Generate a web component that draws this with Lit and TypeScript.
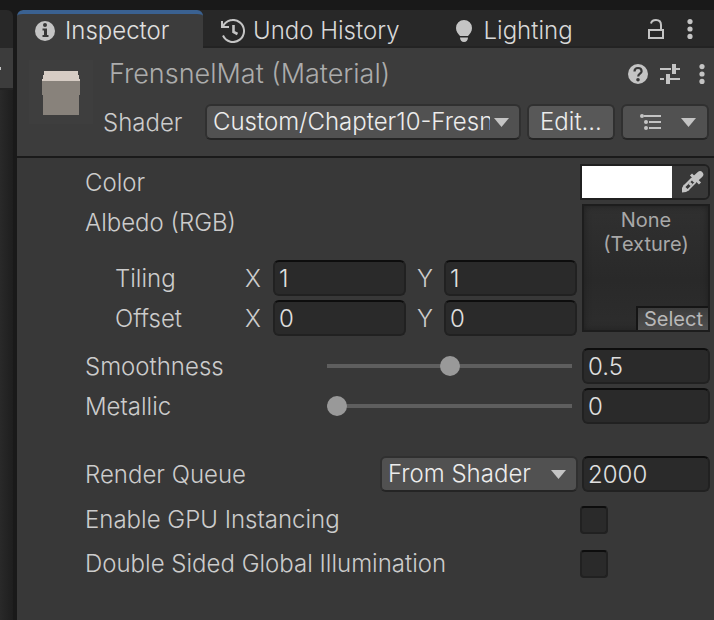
import { LitElement, html, css } from "lit";
import { customElement, state } from "lit/decorators.js";

const icons = {
  info: html`<svg width="20" height="20" viewBox="0 0 20 20" aria-hidden="true">
    <circle cx="10" cy="10" r="10" fill="#c4c4c4" />
    <circle cx="10" cy="4" r="2" fill="#383838" />
    <path d="M7.500 7.500h4.500v6.500h1.500v2H7.500v-2H9V9.500H7.500z" fill="#383838" />
  </svg>`,
  history: html`<svg width="24" height="24" viewBox="0 0 24 24" fill="none" stroke="#c4c4c4" stroke-width="2" aria-hidden="true">
    <path d="M1 2v6h7" />
    <path d="M2 7.500A11 11 0 1 1 2 16.500" />
    <path d="M12.500 6v7l4 2" stroke-width="2.600" />
  </svg>`,
  bulb: html`<svg width="16" height="22" viewBox="0 0 16 22" fill="#c4c4c4" aria-hidden="true">
    <path d="M8 0a8 8 0 0 1 8 8c0 3.500-2 5.500-4 8H4C2 13.500 0 11.500 0 8a8 8 0 0 1 8-8z" />
    <path d="M4 17.500h8c0 2.500-1.500 4.500-4 4.500s-4-2-4-4.500z" />
  </svg>`,
  lock: html`<svg width="16" height="20" viewBox="0 0 16 20" fill="none" stroke="#c4c4c4" stroke-width="2" aria-hidden="true">
    <rect x="1" y="11" width="14" height="8" />
    <path d="M3 4.500C3.500 2 5.500 1 8 1c3.500 0 5 2 5 5v5" />
  </svg>`,
  kebab: html`<svg width="6" height="20" viewBox="0 0 6 20" fill="#c4c4c4" aria-hidden="true">
    <circle cx="3" cy="2.600" r="2.600" /><circle cx="3" cy="10" r="2.600" /><circle cx="3" cy="17.400" r="2.600" />
  </svg>`,
  help: html`<svg width="20" height="20" viewBox="0 0 20 20" aria-hidden="true">
    <circle cx="10" cy="10" r="10" fill="#c4c4c4" />
    <path d="M6.500 7.500C6.500 5.200 8 4 10 4s3.600 1.200 3.600 3.200c0 2.500-3.400 2.600-3.400 5.300" fill="none" stroke="#383838" stroke-width="2.200" />
    <circle cx="10" cy="15.800" r="1.800" fill="#383838" />
  </svg>`,
  preset: html`<svg width="20" height="20" viewBox="0 0 20 20" aria-hidden="true">
    <path d="M0 5h11M16 5h4M0 15h4M9 15h11" stroke="#c4c4c4" stroke-width="2" />
    <path d="M14 0v10M8 10v10" stroke="#c4c4c4" stroke-width="4" />
  </svg>`,
  list: html`<svg width="22" height="16" viewBox="0 0 22 16" aria-hidden="true">
    <path d="M4 2h17M9 8h12M9 14h12" stroke="#c4c4c4" stroke-width="2" />
    <g fill="#c4c4c4"><circle cx="2" cy="2" r="2" /><circle cx="6" cy="8" r="2" /><circle cx="6" cy="14" r="2" /></g>
  </svg>`,
  arrow: html`<svg class="arrow" width="15" height="9" viewBox="0 0 15 9" fill="#c4c4c4" aria-hidden="true">
    <path d="M0 0h15L7.500 9z" />
  </svg>`,
  dropper: html`<svg width="22" height="22" viewBox="0 0 22 22" fill="none" stroke="#c4c4c4" aria-hidden="true">
    <path d="M12 9L4 17" stroke-width="7" />
    <path d="M0 21.500V17l2-3.500L7.500 19 4 21z" fill="#c4c4c4" stroke="none" />
    <path d="M12 9.500L4.500 17" stroke="#383838" stroke-width="3" />
    <path d="M9.500 12L7.500 14" stroke-width="3" />
    <path d="M9 3.500L18 12.500" stroke-width="3" />
    <path d="M13 8L18 3.500" stroke-width="6.500" stroke-linecap="round" />
  </svg>`,
  cube: html`<svg width="64" height="64" viewBox="0 0 64 64" role="img" aria-label="Material preview">
    <rect width="64" height="64" fill="#3e3e3e" />
    <path d="M15 11h34v4h1v4h1v3H13v-3h1v-4h1z" fill="#d6ccc4" />
    <path d="M13 21h38v14h-1v20H14V35h-1z" fill="#88827b" />
  </svg>`,
};

@customElement("app-root")
export class AppRoot extends LitElement {
  @state() private smoothness = "0.5";
  @state() private metallic = "0";

  static styles = css`
    :host {
      display: flex;
      box-sizing: border-box;
      min-height: 100vh;
      padding-top: 10px;
      gap: 4px;
      background: #191919;
      color: #cccccc;
      font: 300 24px/38px Inter, "Liberation Sans", sans-serif;
    }
    * { box-sizing: border-box; }
    svg { display: block; flex: none; }
    button, input, select { font: inherit; color: inherit; margin: 0; min-width: 0; }
    .neighbour { width: 13px; display: flex; flex-direction: column; }
    .neighbour-tab { height: 38px; background: #282828; border-radius: 0 6px 0 0; }
    .neighbour-bar { height: 42px; background: #3c3c3c; border-bottom: 2px solid #232323; display: flex; align-items: center; }
    .neighbour-mark { width: 1px; height: 3px; background: #c4c4c4; }
    .neighbour-view { flex: 1; background: linear-gradient(90deg, #292929, #1e1e1e); }
    .panel { flex: 1; min-width: 0; display: flex; flex-direction: column; background: #383838; border-radius: 6px 0 0 0; overflow: hidden; }
    .tabs { display: flex; height: 38px; background: #282828; }
    .tab {
      display: flex; align-items: center; gap: 8px; height: 38px; padding: 4px 0 0 18px;
      border: 0; background: none; color: #d8d8d8; white-space: nowrap; text-align: left;
      box-shadow: inset 0 -2px #232323;
    }
    .tab.active {
      width: 186px; gap: 10px; padding-top: 0; background: #3c3c3c; color: #e0e0e0;
      border-top: 4px solid #3a6191; border-radius: 6px 6px 0 0; box-shadow: none;
    }
    .tab.light { gap: 12px; padding-left: 56px; }
    .tab-tools { flex: 1; display: flex; align-items: center; justify-content: flex-end; gap: 23px; padding-right: 21px; box-shadow: inset 0 -2px #232323; }
    .icon { display: block; padding: 0; border: 0; background: none; }
    .header { display: flex; gap: 10px; padding: 12px 5px 16px 12px; background: #3c3c3c; border-bottom: 2px solid #1a1a1a; }
    .header-main { flex: 1; min-width: 0; display: flex; flex-direction: column; gap: 16px; }
    .title-row { display: flex; align-items: center; height: 28px; gap: 12px; padding: 0 4px 0 6px; }
    .title { flex: 1; margin: 0; font-size: 27px; line-height: 30px; font-weight: 300; color: #acacac; white-space: nowrap; }
    .title-row .more { margin-left: 7px; }
    .shader-row { display: flex; gap: 6px; height: 36px; }
    .shader-label { width: 96px; }
    .drop { position: relative; display: block; }
    .drop .arrow { position: absolute; right: 12px; top: 14px; pointer-events: none; }
    .drop select { display: block; width: 100%; height: 36px; padding: 0 29px 0 6px; appearance: none; outline-offset: 0; }
    .drop select, .btn {
      background: #515151; color: #ececec; border: 2px solid #303030; border-bottom-color: #242424; border-radius: 6px; line-height: 32px;
    }
    .shader-drop { flex: 1; min-width: 0; }
    .btn { width: 88px; height: 36px; padding: 0; background: #585858; text-align: center; }
    .btn.menu { display: flex; align-items: center; justify-content: space-between; padding: 0 11px 0 17px; background: #515151; }
    .props { display: flex; flex-direction: column; padding: 6px 4px 36px 68px; }
    .row { display: flex; height: 36px; }
    .label { flex: 1; white-space: nowrap; }
    .color { display: flex; width: 130px; height: 36px; border: 2px solid #202020; border-radius: 0 6px 6px 0; overflow: hidden; }
    .swatch { flex: 1; height: 32px; padding: 0; border: 0; border-radius: 0; background: #fff; appearance: none; }
    .swatch::-webkit-color-swatch-wrapper { padding: 0; }
    .swatch::-webkit-color-swatch { border: 0; border-radius: 0; }
    .pick { width: 36px; padding: 0 0 0 10px; border: 0; background: #383838; }
    .albedo { display: flex; gap: 5px; margin: 4px 0 12px; }
    .albedo-main { flex: 1; min-width: 0; display: flex; flex-direction: column; gap: 4px; }
    .albedo-main .label { flex: none; height: 36px; margin-bottom: 16px; }
    .vector { display: grid; grid-template-columns: 130px 28px 1fr 11px 27px 1fr; padding-left: 30px; height: 36px; }
    .vector .y { grid-column: 5; }
    .field {
      width: 100%; height: 36px; padding: 1px 4px 0; background: #2a2a2a; color: #e0e0e0;
      border: 2px solid #212121; border-top-color: #0d0d0d; border-radius: 6px;
    }
    .field.side { width: 128px; flex: none; }
    .texture {
      display: flex; flex-direction: column; width: 128px; height: 128px; border: 2px solid #1d1d1d;
      background: linear-gradient(#303030, #292929 60%, #2d2d2d); box-shadow: inset 0 0 6px #1f1f1f;
    }
    .none { flex: 1; padding-top: 2px; font-size: 20px; line-height: 24px; font-weight: 400; text-align: center; color: #a8a8a8; }
    .select {
      align-self: flex-end; width: 72px; height: 24px; padding: 0 5px 0 0; font-size: 20px; line-height: 20px; font-weight: 400; text-align: right;
      border: 0 solid #151515; border-width: 2px 0 0 2px; background: linear-gradient(#3c3c3c, #505050); color: #b8b8b8;
    }
    .slide .label { flex: none; width: 242px; }
    .slider { flex: 1; height: 36px; margin-right: 10px; appearance: none; background: none; }
    .slider::-webkit-slider-runnable-track { height: 4px; background: #5e5e5e; }
    .slider::-webkit-slider-thumb { appearance: none; width: 20px; height: 20px; margin-top: -8px; border-radius: 50%; background: #999; }
    .metallic { margin-top: 4px; }
    .queue { margin-top: 32px; margin-bottom: 10px; gap: 4px; }
    .queue .drop { width: 198px; }
    .check { align-items: center; margin-bottom: 8px; }
    .box {
      width: 28px; height: 28px; margin-right: 102px; appearance: none; background: #2a2a2a;
      border: 2px solid #212121; border-top-color: #0d0d0d; border-radius: 4px;
    }
    .box:checked { background: #c4c4c4; }
  `;

  private vector(name: string, value: string) {
    const id = name.toLowerCase();
    return html`<div class="vector" role="group" aria-label=${name}>
      <span>${name}</span>
      <label for="${id}-x">X</label>
      <input class="field" id="${id}-x" .value=${value} />
      <label class="y" for="${id}-y">Y</label>
      <input class="field" id="${id}-y" .value=${value} />
    </div>`;
  }

  private slide(name: string, cls: string, value: string, set: (v: string) => void) {
    const update = (e: Event) => set((e.target as HTMLInputElement).value);
    return html`<div class="row slide ${cls}">
      <label class="label" for=${cls}>${name}</label>
      <input class="slider" id=${cls} type="range" min="0" max="1" step="0.01" .value=${value} @input=${update} />
      <input class="field side" aria-label="${name} value" .value=${value} @change=${update} />
    </div>`;
  }

  render() {
    return html`
      <div class="neighbour">
        <div class="neighbour-tab"></div>
        <div class="neighbour-bar"><div class="neighbour-mark"></div></div>
        <div class="neighbour-view"></div>
      </div>
      <main class="panel">
        <nav class="tabs">
          <button class="tab active">${icons.info}Inspector</button>
          <button class="tab">${icons.history}Undo History</button>
          <button class="tab light">${icons.bulb}Lighting</button>
          <div class="tab-tools">
            <button class="icon" aria-label="Lock">${icons.lock}</button>
            <button class="icon" aria-label="Tab menu">${icons.kebab}</button>
          </div>
        </nav>
        <header class="header">
          ${icons.cube}
          <div class="header-main">
            <div class="title-row">
              <h1 class="title">FrensnelMat (Material)</h1>
              <button class="icon" aria-label="Help">${icons.help}</button>
              <button class="icon" aria-label="Presets">${icons.preset}</button>
              <button class="icon more" aria-label="More">${icons.kebab}</button>
            </div>
            <div class="shader-row">
              <label class="shader-label" for="shader">Shader</label>
              <div class="drop shader-drop">
                <select id="shader"><option>Custom/Chapter10-Fresnel</option></select>${icons.arrow}
              </div>
              <button class="btn">Edit...</button>
              <button class="btn menu" aria-label="Shader list">${icons.list}${icons.arrow}</button>
            </div>
          </div>
        </header>
        <section class="props">
          <div class="row">
            <label class="label" for="color">Color</label>
            <div class="color">
              <input class="swatch" id="color" type="color" value="#ffffff" />
              <button class="pick" aria-label="Pick color">${icons.dropper}</button>
            </div>
          </div>
          <div class="albedo">
            <div class="albedo-main">
              <span class="label">Albedo (RGB)</span>
              ${this.vector("Tiling", "1")}
              ${this.vector("Offset", "0")}
            </div>
            <div class="texture">
              <div class="none">None<br />(Texture)</div>
              <button class="select">Select</button>
            </div>
          </div>
          ${this.slide("Smoothness", "smoothness", this.smoothness, (v) => (this.smoothness = v))}
          ${this.slide("Metallic", "metallic", this.metallic, (v) => (this.metallic = v))}
          <div class="row queue">
            <label class="label" for="queue">Render Queue</label>
            <div class="drop">
              <select id="queue"><option>From Shader</option></select>${icons.arrow}
            </div>
            <input class="field side" aria-label="Render Queue value" value="2000" />
          </div>
          <div class="row check">
            <label class="label" for="gpu">Enable GPU Instancing</label>
            <input class="box" id="gpu" type="checkbox" />
          </div>
          <div class="row check">
            <label class="label" for="gi">Double Sided Global Illumination</label>
            <input class="box" id="gi" type="checkbox" />
          </div>
        </section>
      </main>
    `;
  }
}
